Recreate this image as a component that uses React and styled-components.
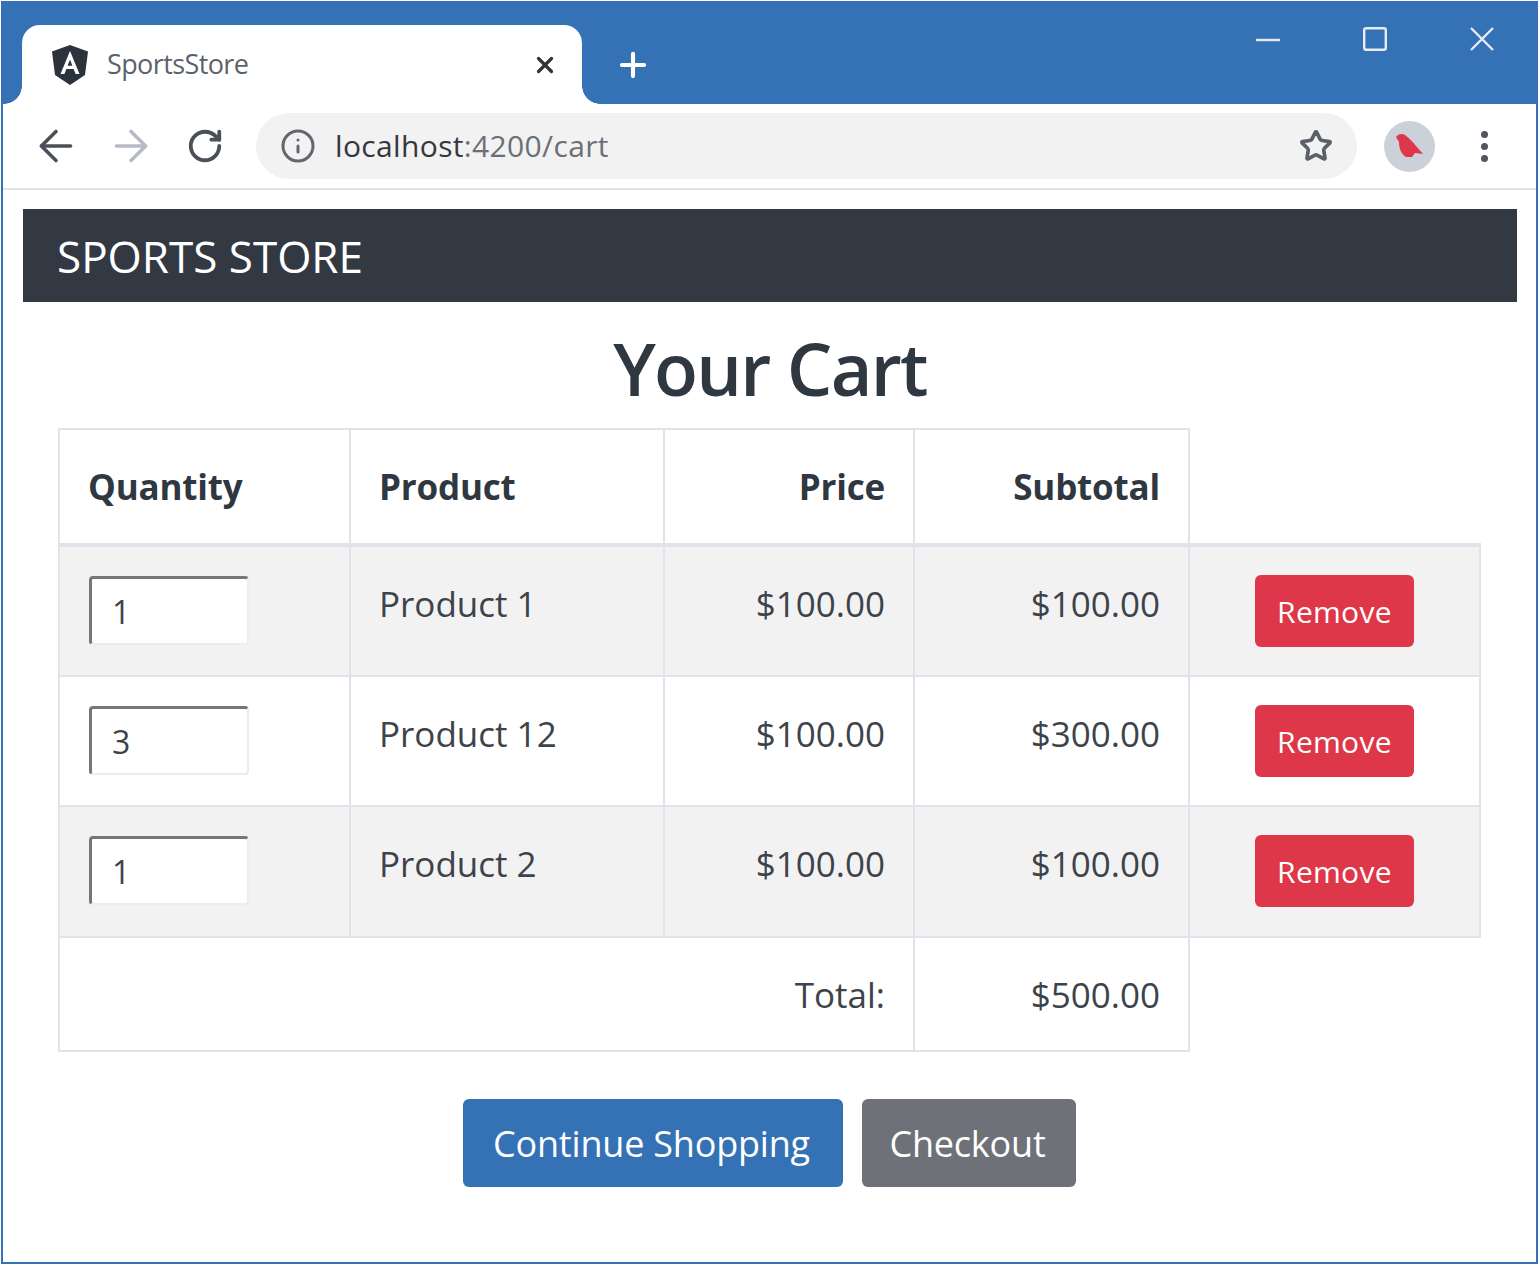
import React from "react";
import styled, { createGlobalStyle } from "styled-components";
import { ArrowLeft, ArrowRight, RotateCw, Info, Star, X, Plus } from "lucide-react";

const GlobalStyle = createGlobalStyle`
  html, body {
    margin: 0;
    background: #fff;
    font-family: "Open Sans", "Noto Sans", sans-serif;
  }
`;

const Page = styled.div`
  width: 1539px;
  height: 1266px;
  box-sizing: border-box;
  padding: 1px;
  background: #fff;
  overflow: hidden;
`;

const BrowserWindow = styled.div`
  height: 1263px;
  box-sizing: border-box;
  border: 2px solid #3571b5;
  border-top-width: 0;
  display: flex;
  flex-direction: column;
  background: #fff;
`;

const TitleBar = styled.div`
  height: 103px;
  flex: none;
  background: #3571b5;
  display: flex;
  align-items: flex-end;
  padding-left: 19px;
`;

const Tab = styled.div`
  position: relative;
  width: 560px;
  height: 79px;
  box-sizing: border-box;
  background: #fff;
  border-radius: 18px 18px 0 0;
  display: flex;
  align-items: center;
  padding: 0 24px 0 28px;
  &::before,
  &::after {
    content: "";
    position: absolute;
    bottom: 0;
    width: 18px;
    height: 18px;
  }
  &::before {
    left: -18px;
    background: radial-gradient(circle at 0 0, #3571b5 17.5px, #fff 18px);
  }
  &::after {
    right: -18px;
    background: radial-gradient(circle at 100% 0, #3571b5 17.5px, #fff 18px);
  }
`;

const TabTitle = styled.span`
  margin-left: 17px;
  padding-bottom: 2px;
  flex: 1;
  font-size: 27px;
  letter-spacing: -0.6px;
  color: #5b626c;
`;

const NewTab = styled.div`
  margin: 0 0 19px 32px;
  height: 40px;
  display: flex;
  align-items: center;
  color: #fff;
`;

const WindowControls = styled.div`
  margin-left: auto;
  align-self: flex-start;
  display: flex;
  align-items: center;
  gap: 83px;
  padding: 26px 42px 0 0;
  color: #e8ecf2;
`;

const Toolbar = styled.div`
  height: 86px;
  flex: none;
  box-sizing: border-box;
  display: flex;
  align-items: center;
  padding: 0 0 0 15px;
  border-bottom: 2px solid #e2e3ea;
`;

const NavIcons = styled.div`
  display: grid;
  grid-template-columns: repeat(3, 75px);
  place-items: center;
  svg:last-child {
    margin-right: 2px;
  }
`;

const AddressBar = styled.div`
  margin-left: 13px;
  width: 1101px;
  height: 66px;
  box-sizing: border-box;
  border-radius: 33px;
  background: #f3f2f2;
  display: flex;
  align-items: center;
  padding: 0 24px 0 24px;
`;

const Url = styled.span`
  margin-left: 19px;
  padding-bottom: 2px;
  flex: 1;
  font-size: 30px;
  letter-spacing: 0.35px;
  color: #6a6f78;
  b {
    font-weight: 400;
    color: #33383f;
  }
`;

const Avatar = styled.div`
  margin-left: 27px;
  width: 51px;
  height: 51px;
  border-radius: 50%;
  background: #ccd0d9;
  display: flex;
  align-items: center;
  justify-content: center;
`;

const MenuDots = styled.div`
  margin-left: 46px;
  display: flex;
  flex-direction: column;
  gap: 5px;
  span {
    width: 7px;
    height: 7px;
    border-radius: 50%;
    background: #50555e;
  }
`;

const Content = styled.div`
  flex: 1;
  padding: 19px 19px 0 20px;
`;

const Navbar = styled.div`
  height: 93px;
  box-sizing: border-box;
  background: #323943;
  color: #fff;
  display: flex;
  align-items: center;
  padding-left: 34px;
  font-size: 44px;
`;

const Heading = styled.h2`
  margin: 23px 0 17px;
  text-align: center;
  font-size: 72px;
  line-height: 86px;
  font-weight: 600;
  letter-spacing: -1.7px;
  color: #2f3741;
`;

const CartTable = styled.table`
  margin-left: 35px;
  width: 1422px;
  table-layout: fixed;
  border-collapse: collapse;
  font-size: 35px;
  color: #3d434b;
`;

const HeadCell = styled.th`
  height: 116px;
  box-sizing: border-box;
  padding: 0 28px;
  border: 2px solid #e2e3ea;
  border-bottom-width: 4px;
  color: #2f3741;
  font-weight: 700;
  letter-spacing: -0.2px;
  text-align: ${(p) => (p.$right ? "right" : "left")};
`;

const BlankHead = styled.th`
  border-bottom: 4px solid #e2e3ea;
`;

const Row = styled.tr`
  background: ${(p) => (p.$striped ? "#f3f2f2" : "#fff")};
`;

const Cell = styled.td`
  height: ${(p) => (p.$tall ? 131 : 130)}px;
  box-sizing: border-box;
  padding: 32px 28px 0;
  vertical-align: top;
  border: 2px solid #e2e3ea;
  line-height: 50px;
  text-align: ${(p) => (p.$right ? "right" : "left")};
`;

const ControlCell = styled(Cell)`
  padding: 29px 0 0 29px;
`;

const ActionCell = styled(Cell)`
  padding: 28px 0 0;
  text-align: center;
`;

const TotalCell = styled.td`
  height: 114px;
  box-sizing: border-box;
  padding: 0 28px;
  border: 2px solid #e2e3ea;
  text-align: right;
`;

const QtyInput = styled.input`
  display: block;
  width: 160px;
  height: 69px;
  box-sizing: border-box;
  padding: 0 20px;
  border-style: solid;
  border-width: 3px 2px 2px 3px;
  border-color: #767676 #ededed #ededed #767676;
  border-radius: 4px;
  background: #fff;
  font-family: inherit;
  font-size: 32px;
  color: #3d434b;
  outline: none;
`;

const RemoveButton = styled.button`
  width: 159px;
  height: 72px;
  border: 0;
  border-radius: 6px;
  background: #dd3749;
  color: #fff;
  font-family: inherit;
  font-size: 30px;
  letter-spacing: 0.3px;
  padding: 0;
`;

const Actions = styled.div`
  margin-top: 47px;
  display: flex;
  justify-content: center;
  gap: 19px;
  padding-right: 1px;
`;

const ActionButton = styled.button`
  height: 88px;
  border: 0;
  border-radius: 6px;
  padding: 0 3px 0 0;
  width: ${(p) => p.$width}px;
  background: ${(p) => p.$bg};
  color: #fff;
  font-family: inherit;
  font-size: 36px;
  letter-spacing: -0.2px;
`;

function AngularLogo() {
  return (
    <svg width="40" height="42" viewBox="0 0 40 42">
      <path d="M20 1 L38 7.5 L35 31 L20 41 L5 31 L2 7.5 Z" fill="#2c333d" />
      <path d="M20 7 L29.5 30 H25.6 L23.6 25 H16.4 L14.4 30 H10.5 Z M20 15.5 L17.6 21.8 H22.4 Z" fill="#fff" fillRule="evenodd" />
    </svg>
  );
}

function Bird() {
  return (
    <svg width="30" height="26" viewBox="0 0 30 26">
      <path d="M1 4 C3 1 7 0 10 2 C14 5 18 9 21 13 L28 21 L20 20 L17 24 L11 24 C6 21 4 15 4 9 Z" fill="#dd3749" />
    </svg>
  );
}

// window buttons are 24px squares, thinner than the lucide ones
function WindowIcon({ d }) {
  return (
    <svg width="24" height="24" viewBox="0 0 24 24" fill="none" stroke="currentColor" strokeWidth="2.4">
      <path d={d} />
    </svg>
  );
}

const items = [
  { qty: 1, name: "Product 1", price: "$100.00", subtotal: "$100.00" },
  { qty: 3, name: "Product 12", price: "$100.00", subtotal: "$300.00" },
  { qty: 1, name: "Product 2", price: "$100.00", subtotal: "$100.00" },
];

export default function App() {
  return (
    <Page>
      <GlobalStyle />
      <BrowserWindow>
        <TitleBar>
          <Tab>
            <AngularLogo />
            <TabTitle>SportsStore</TabTitle>
            <X size={26} strokeWidth={3} color="#2f343b" />
          </Tab>
          <NewTab>
            <Plus size={38} strokeWidth={2.6} />
          </NewTab>
          <WindowControls>
            <WindowIcon d="M0 13H24" />
            <WindowIcon d="M1.2 3.2Q1.2 1.2 3.2 1.2H20.8Q22.8 1.2 22.8 3.2V20.8Q22.8 22.8 20.8 22.8H3.2Q1.2 22.8 1.2 20.8Z" />
            <WindowIcon d="M1 1L23 23M23 1L1 23" />
          </WindowControls>
        </TitleBar>
        <Toolbar>
          <NavIcons>
            <ArrowLeft size={50} strokeWidth={1.7} color="#4b5058" />
            <ArrowRight size={50} strokeWidth={1.7} color="#b6bac6" />
            <RotateCw size={38} strokeWidth={2.4} color="#4b5058" />
          </NavIcons>
          <AddressBar>
            <Info size={36} strokeWidth={2} color="#62676f" />
            <Url>
              <b>localhost</b>:4200/cart
            </Url>
            <Star size={34} strokeWidth={2.6} color="#5c6068" />
          </AddressBar>
          <Avatar>
            <Bird />
          </Avatar>
          <MenuDots>
            <span />
            <span />
            <span />
          </MenuDots>
        </Toolbar>
        <Content>
          <Navbar>SPORTS STORE</Navbar>
          <Heading>Your Cart</Heading>
          <CartTable>
            <colgroup>
              <col style={{ width: 291 }} />
              <col style={{ width: 314 }} />
              <col style={{ width: 250 }} />
              <col style={{ width: 275 }} />
              <col style={{ width: 291 }} />
            </colgroup>
            <thead>
              <tr>
                <HeadCell>Quantity</HeadCell>
                <HeadCell>Product</HeadCell>
                <HeadCell $right>Price</HeadCell>
                <HeadCell $right>Subtotal</HeadCell>
                <BlankHead />
              </tr>
            </thead>
            <tbody>
              {items.map((item, i) => {
                const odd = i % 2 === 0;
                return (
                  <Row key={item.name} $striped={odd}>
                    <ControlCell $tall={odd}>
                      <QtyInput defaultValue={item.qty} />
                    </ControlCell>
                    <Cell $tall={odd}>{item.name}</Cell>
                    <Cell $tall={odd} $right>{item.price}</Cell>
                    <Cell $tall={odd} $right>{item.subtotal}</Cell>
                    <ActionCell $tall={odd}>
                      <RemoveButton>Remove</RemoveButton>
                    </ActionCell>
                  </Row>
                );
              })}
            </tbody>
            <tfoot>
              <tr>
                <TotalCell colSpan={3}>Total:</TotalCell>
                <TotalCell>$500.00</TotalCell>
                <td />
              </tr>
            </tfoot>
          </CartTable>
          <Actions>
            <ActionButton $width={380} $bg="#3571b5">Continue Shopping</ActionButton>
            <ActionButton $width={214} $bg="#6f7178">Checkout</ActionButton>
          </Actions>
        </Content>
      </BrowserWindow>
    </Page>
  );
}
